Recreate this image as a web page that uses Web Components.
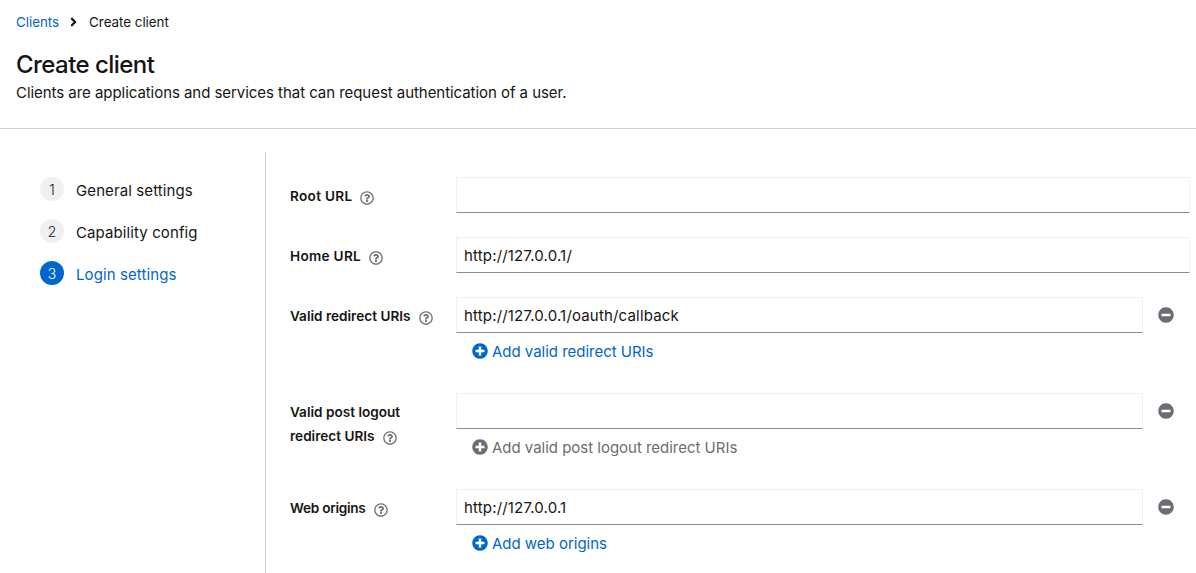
<!DOCTYPE html>
<html>
<head>
<meta charset="utf-8">
<title>Create client</title>
<style>
  html, body { margin: 0; height: 573px; overflow: hidden; background: #fff; }
  body { font-family: "Inter", "Liberation Sans", sans-serif; color: #151515; font-size: 15px; }
</style>
</head>
<body>
<client-page>
  <page-header slot="header" crumb="Clients" current="Create client" title="Create client"
    text="Clients are applications and services that can request authentication of a user."></page-header>
  <wizard-steps slot="nav">
    <wizard-step num="1">General settings</wizard-step>
    <wizard-step num="2">Capability config</wizard-step>
    <wizard-step num="3" current>Login settings</wizard-step>
  </wizard-steps>
  <form-row label="Root URL" style="--label-track: .3px"><text-field></text-field></form-row>
  <form-row label="Home URL" style="--label-track: .3px"><text-field>http://127.0.0.1/</text-field></form-row>
  <form-row label="Valid redirect URIs"><multi-field add="Add valid redirect URIs">http://127.0.0.1/oauth/callback</multi-field></form-row>
  <form-row label="Valid post logout" label2="redirect URIs"><multi-field add="Add valid post logout redirect URIs" disabled></multi-field></form-row>
  <form-row label="Web origins" style="--label-track: -.25px"><multi-field add="Add web origins">http://127.0.0.1</multi-field></form-row>
</client-page>

<script>
const ICONS = {
  help: `<svg viewBox="0 0 512 512" fill="currentColor"><path d="M256 8C119.043 8 8 119.083 8 256c0 136.997 111.043 248 248 248s248-111.003 248-248C504 119.083 392.957 8 256 8zm0 448c-110.532 0-200-89.431-200-200 0-110.495 89.472-200 200-200 110.491 0 200 89.471 200 200 0 110.53-89.431 200-200 200zm107.244-255.2c0 67.052-72.421 68.084-72.421 92.863V300c0 6.627-5.373 12-12 12h-45.647c-6.627 0-12-5.373-12-12v-8.659c0-35.745 27.1-50.034 47.579-61.516 17.561-9.845 28.324-16.541 28.324-29.579 0-17.246-21.999-28.693-39.784-28.693-23.189 0-33.894 10.977-48.942 29.969-4.057 5.12-11.46 6.071-16.666 2.124l-27.824-21.098c-5.107-3.872-6.251-11.066-2.644-16.363C184.846 131.491 214.94 112 261.794 112c49.071 0 101.45 38.304 101.45 88.8zM298 368c0 23.159-18.841 42-42 42s-42-18.841-42-42 18.841-42 42-42 42 18.841 42 42z"/></svg>`,
  plus: `<svg viewBox="0 0 512 512" fill="currentColor"><path d="M256 8C119 8 8 119 8 256s111 248 248 248 248-111 248-248S393 8 256 8zm144 276c0 6.6-5.4 12-12 12h-92v92c0 6.6-5.4 12-12 12h-56c-6.6 0-12-5.4-12-12v-92h-92c-6.6 0-12-5.4-12-12v-56c0-6.6 5.4-12 12-12h92v-92c0-6.6 5.4-12 12-12h56c6.6 0 12 5.4 12 12v92h92c6.6 0 12 5.4 12 12v56z"/></svg>`,
  minus: `<svg viewBox="0 0 512 512" fill="currentColor"><path d="M256 8C119 8 8 119 8 256s111 248 248 248 248-111 248-248S393 8 256 8zM124 296c-6.6 0-12-5.4-12-12v-56c0-6.6 5.4-12 12-12h264c6.6 0 12 5.4 12 12v56c0 6.6-5.4 12-12 12H124z"/></svg>`,
  angle: `<svg viewBox="0 0 256 512" fill="currentColor"><path d="M224.3 273l-136 136c-9.4 9.4-24.6 9.4-33.9 0l-22.6-22.6c-9.4-9.4-9.4-24.6 0-33.9l96.4-96.4-96.4-96.4c-9.4-9.4-9.4-24.6 0-33.9L54.3 103c9.4-9.4 24.6-9.4 33.9 0l136 136c9.5 9.4 9.5 24.6.1 34z"/></svg>`
};

class ClientPage extends HTMLElement {
  constructor() {
    super();
    this.attachShadow({ mode: "open" }).innerHTML = `
    <style>
      :host { display: block; height: 573px; overflow: hidden; }
      .body { display: flex; padding-top: 23px; height: 421px; }
      .nav { flex: none; width: 265px; height: 421px; border-right: 1px solid #d2d2d2; }
      .form { flex: 1; min-width: 0; display: flex; flex-direction: column; gap: 24px; padding: 25px 6px 0 24px; }
      ::slotted(page-header) { display: block; }
    </style>
    <slot name="header"></slot>
    <div class="body">
      <div class="nav"><slot name="nav"></slot></div>
      <div class="form"><slot></slot></div>
    </div>`;
  }
}

class PageHeader extends HTMLElement {
  connectedCallback() {
    if (this.shadowRoot) return;
    this.attachShadow({ mode: "open" }).innerHTML = `
    <style>
      :host { display: block; border-bottom: 1px solid #d2d2d2; padding: 11px 16px 24px; height: 93px; }
      nav { display: flex; align-items: center; height: 21px; font-size: 13.4px; letter-spacing: -0.03px; }
      a { color: #0066cc; text-decoration: none; }
      svg { width: 7px; height: 14px; display: block; margin: 1px 12px 0 11px; color: #151515; }
      h1 { margin: 18px 0 0; font-size: 24px; line-height: 29px; font-weight: 500; color: #151515; letter-spacing: -0.55px; }
      p { margin: 2px 0 0; font-size: 15px; line-height: 24px; letter-spacing: -0.05px; }
    </style>
    <nav><a>${this.getAttribute("crumb")}</a>${ICONS.angle}<span>${this.getAttribute("current")}</span></nav>
    <h1>${this.getAttribute("title")}</h1>
    <p>${this.getAttribute("text")}</p>`;
  }
}

class WizardSteps extends HTMLElement {
  constructor() {
    super();
    this.attachShadow({ mode: "open" }).innerHTML = `
    <style>
      :host { display: flex; flex-direction: column; gap: 18px; padding: 25px 0 0 40px; }
    </style>
    <slot></slot>`;
  }
}

class WizardStep extends HTMLElement {
  connectedCallback() {
    if (this.shadowRoot) return;
    this.attachShadow({ mode: "open" }).innerHTML = `
    <style>
      :host { display: flex; align-items: center; gap: 12px; height: 24px; font-size: 15px; letter-spacing: 0.1px; color: #151515; }
      :host([current]) { color: #0066cc; }
      .num { width: 24px; height: 24px; border-radius: 50%; background: #f0f0f0; display: flex; align-items: center; justify-content: center; font-size: 14px; font-weight: 300; letter-spacing: 0; color: #151515; }
      :host([current]) .num { background: #0066cc; color: #fff; }
      .text { padding-top: 2px; }
    </style>
    <span class="num">${this.getAttribute("num")}</span><span class="text"><slot></slot></span>`;
  }
}

class FormRow extends HTMLElement {
  connectedCallback() {
    if (this.shadowRoot) return;
    const second = this.getAttribute("label2");
    const text = second
      ? `${this.getAttribute("label")}<br>${second}`
      : this.getAttribute("label");
    this.attachShadow({ mode: "open" }).innerHTML = `
    <style>
      :host { display: grid; grid-template-columns: 166px 1fr; }
      label { padding-top: 7px; font-size: 13.6px; line-height: 24px; font-weight: 600; color: #151515; letter-spacing: var(--label-track, 0px); }
      svg { width: 14px; height: 14px; color: #6a6e73; display: inline-block; vertical-align: -4px; margin-left: 8px; }
    </style>
    <label>${text}${ICONS.help}</label>
    <div><slot></slot></div>`;
  }
}

class TextField extends HTMLElement {
  constructor() {
    super();
    this.attachShadow({ mode: "open" }).innerHTML = `
    <style>
      :host { display: flex; align-items: center; box-sizing: border-box; height: 36px; padding: 0 7px; background: #fff;
        border: 1px solid #f0f0f0; border-bottom-color: #8a8d90; font-size: 15px; letter-spacing: 0.17px; color: #151515; }
    </style>
    <slot></slot>`;
  }
}

class MultiField extends HTMLElement {
  connectedCallback() {
    if (this.shadowRoot) return;
    const off = this.hasAttribute("disabled");
    this.attachShadow({ mode: "open" }).innerHTML = `
    <style>
      :host { display: block; }
      .line { display: flex; }
      text-field { flex: 1; }
      .remove { flex: none; width: 45px; padding-right: 2px; display: flex; align-items: center; justify-content: center; color: #6a6e73; }
      .remove svg { width: 16px; height: 16px; display: block; }
      .add { display: flex; align-items: center; gap: 4px; height: 36px; padding-left: 16px; font-size: 15px; letter-spacing: -0.02px; color: #0066cc; }
      .add svg { width: 16px; height: 16px; display: block; }
      .add.off { color: #6a6e73; }
    </style>
    <div class="line"><text-field><slot></slot></text-field><span class="remove">${ICONS.minus}</span></div>
    <div class="add${off ? " off" : ""}">${ICONS.plus}<span>${this.getAttribute("add")}</span></div>`;
  }
}

customElements.define("text-field", TextField);
customElements.define("multi-field", MultiField);
customElements.define("form-row", FormRow);
customElements.define("wizard-step", WizardStep);
customElements.define("wizard-steps", WizardSteps);
customElements.define("page-header", PageHeader);
customElements.define("client-page", ClientPage);
</script>
</body>
</html>
